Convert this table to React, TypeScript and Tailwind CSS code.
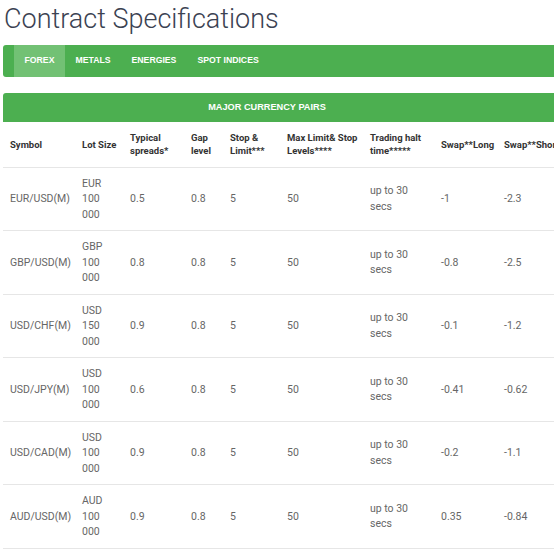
const rows = [
  { symbol: 'EUR/USD(M)', cur: 'EUR', lot: '100 000', spread: '0.5', gap: '0.8', stop: '5', max: '50', long: '-1', short: '-2.3' },
  { symbol: 'GBP/USD(M)', cur: 'GBP', lot: '100 000', spread: '0.8', gap: '0.8', stop: '5', max: '50', long: '-0.8', short: '-2.5' },
  { symbol: 'USD/CHF(M)', cur: 'USD', lot: '150 000', spread: '0.9', gap: '0.8', stop: '5', max: '50', long: '-0.1', short: '-1.2' },
  { symbol: 'USD/JPY(M)', cur: 'USD', lot: '100 000', spread: '0.6', gap: '0.8', stop: '5', max: '50', long: '-0.41', short: '-0.62' },
  { symbol: 'USD/CAD(M)', cur: 'USD', lot: '100 000', spread: '0.9', gap: '0.8', stop: '5', max: '50', long: '-0.2', short: '-1.1' },
  { symbol: 'AUD/USD(M)', cur: 'AUD', lot: '100 000', spread: '0.9', gap: '0.8', stop: '5', max: '50', long: '0.35', short: '-0.84' },
];

const tabs = ['FOREX', 'METALS', 'ENERGIES', 'SPOT INDICES'];

const widths = ['w-[72px]', 'w-[48px]', 'w-[61px]', 'w-[39px]', 'w-[57px]', 'w-[83px]', 'w-[71px]', 'w-[63px]', 'w-[80px]'];

export default function App() {
  return (
    <div className="w-[554px] h-[549px] overflow-hidden bg-white font-['Roboto',sans-serif]">
      <div className="w-[640px] pl-[3px]">
        <h1 className="pl-[1px] pt-[1px] text-[27px] font-light leading-[36px] text-[#3b4252]">Contract Specifications</h1>

        {/* Tabs */}
        <div className="mt-[8px] flex h-[32px] rounded-l-[3px] bg-[#4caf50] pl-[11px] font-['Liberation_Sans',Arial,sans-serif] text-[8.7px] font-bold text-white">
          {tabs.map((t, i) => (
            <div key={t} className={`flex items-center px-[10.5px] ${i === 0 ? 'bg-[#72c174]' : ''}`}>
              {t}
            </div>
          ))}
        </div>

        {/* Caption */}
        <div className="mt-[16px] flex h-[29px] items-center rounded-tl-[3px] bg-[#4caf50] font-['Liberation_Sans',Arial,sans-serif] text-[9.2px] font-bold text-white">
          <div className="w-[528px] text-center">MAJOR CURRENCY PAIRS</div>
        </div>

        <table className="w-[574px] table-fixed border-collapse text-left">
          <colgroup>
            {widths.map((w, i) => (
              <col key={i} className={w} />
            ))}
          </colgroup>
          <thead>
            <tr className="h-[45px] border-b border-[#e6e6e6] text-[9.5px] font-bold leading-[13.5px] text-[#333]">
              <th className="pl-[7px] pr-[3px] align-middle">Symbol</th>
              <th className="pl-[7px] pr-[3px] align-middle whitespace-nowrap">Lot Size</th>
              <th className="pl-[7px] pr-[3px] align-middle">Typical spreads*</th>
              <th className="pl-[7px] pr-[3px] align-middle">Gap level</th>
              <th className="pl-[7px] pr-[3px] align-middle">Stop &amp; Limit***</th>
              <th className="pl-[7px] pr-[3px] align-middle">Max Limit&amp; Stop Levels****</th>
              <th className="pl-[7px] pr-[3px] align-middle">Trading halt time*****</th>
              <th className="pl-[7px] pr-[3px] align-middle whitespace-nowrap">Swap**Long</th>
              <th className="pl-[7px] pr-[3px] align-middle whitespace-nowrap">Swap**Short</th>
            </tr>
          </thead>
          <tbody className="text-[10.5px] leading-[15.5px] text-[#666]">
            {rows.map(r => {
              const [a, b] = r.lot.split(' ');
              return (
                <tr key={r.symbol} className="h-[63.5px] border-b border-[#e6e6e6]">
                  <td className="pl-[7px] py-[8px] whitespace-nowrap">{r.symbol}</td>
                  <td className="pl-[7px] py-[8px]">
                    {r.cur}
                    <br />
                    {a}
                    <br />
                    {b}
                  </td>
                  <td className="pl-[7px]">{r.spread}</td>
                  <td className="pl-[7px]">{r.gap}</td>
                  <td className="pl-[7px]">{r.stop}</td>
                  <td className="pl-[7px]">{r.max}</td>
                  <td className="pl-[7px]">
                    up to 30
                    <br />
                    secs
                  </td>
                  <td className="pl-[7px]">{r.long}</td>
                  <td className="pl-[7px]">{r.short}</td>
                </tr>
              );
            })}
          </tbody>
        </table>
      </div>
    </div>
  );
}
